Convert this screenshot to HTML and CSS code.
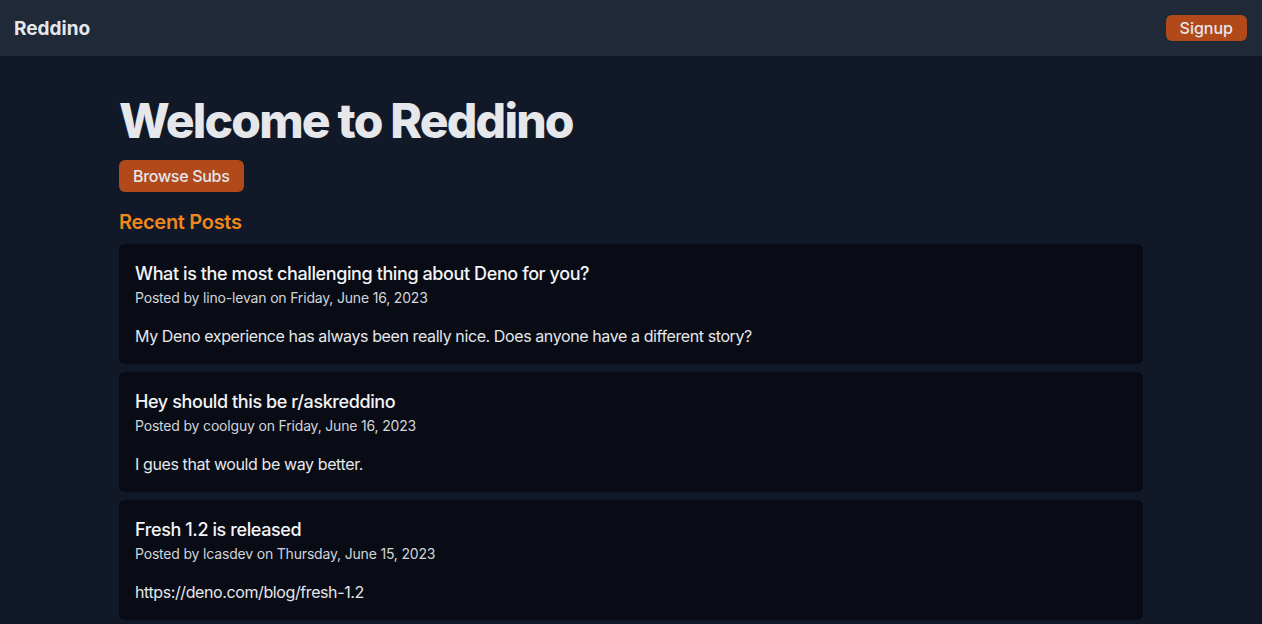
FILE: index.html
```html
<!DOCTYPE html>
<html lang="en">
<head>
    <meta charset="UTF-8">
    <meta name="viewport" content="width=device-width, initial-scale=1.0">
    <title>Reddino</title>
    <link rel="stylesheet" href="styles.css">
</head>
<body>
    <header class="topbar">
        <a class="brand" href="#">Reddino</a>
        <a class="btn btn-small" href="#">Signup</a>
    </header>

    <main class="container">
        <h1 class="title">Welcome to Reddino</h1>
        <a class="btn" href="#">Browse Subs</a>

        <h2 class="section-title">Recent Posts</h2>
        <ul class="posts">
            <li class="post">
                <h3 class="post-title">What is the most challenging thing about Deno for you?</h3>
                <p class="post-meta">Posted by lino-levan on Friday, June 16, 2023</p>
                <p class="post-body">My Deno experience has always been really nice. Does anyone have a different story?</p>
            </li>
            <li class="post">
                <h3 class="post-title">Hey should this be r/askreddino</h3>
                <p class="post-meta">Posted by coolguy on Friday, June 16, 2023</p>
                <p class="post-body">I gues that would be way better.</p>
            </li>
            <li class="post">
                <h3 class="post-title">Fresh 1.2 is released</h3>
                <p class="post-meta">Posted by lcasdev on Thursday, June 15, 2023</p>
                <p class="post-body">https://deno.com/blog/fresh-1.2</p>
            </li>
        </ul>
    </main>
</body>
</html>
```

FILE: styles.css
```css
* {
    box-sizing: border-box;
}
body {
    margin: 0;
    font-family: Inter, "Noto Sans", sans-serif;
    background-color: #111827;
    color: #e5e7eb;
}
a {
    text-decoration: none;
    color: inherit;
}
.topbar {
    height: 56px;
    padding: 0 15px 0 14px;
    display: flex;
    align-items: center;
    justify-content: space-between;
    background-color: #1f2937;
}
.brand {
    font-size: 19px;
    font-weight: 700;
    letter-spacing: 0;
    color: #e5e7eb;
}
.btn {
    display: inline-block;
    padding: 4px 14px;
    font-size: 16px;
    line-height: 24px;
    font-weight: 500;
    letter-spacing: -0.3px;
    color: #e5e7eb;
    background-color: #b1491a;
    border-radius: 6px;
}
.btn-small {
    padding: 1px 14px;
    letter-spacing: 0;
}
.container {
    max-width: 1024px;
    margin: 0 auto;
    padding-top: 41px;
}
.title {
    margin: 0 0 15px;
    font-size: 48px;
    line-height: 48px;
    font-weight: 800;
    letter-spacing: -1.8px;
    color: #e5e7eb;
}
.section-title {
    margin: 16px 0 8px;
    font-size: 20px;
    line-height: 28px;
    font-weight: 600;
    letter-spacing: -0.3px;
    color: #f0881e;
}
.posts {
    list-style: none;
    margin: 0;
    padding: 0;
    display: flex;
    flex-direction: column;
    gap: 8px;
}
.post {
    padding: 16px;
    background-color: #090c15;
    border-radius: 6px;
}
.post-title {
    margin: 0;
    font-size: 18px;
    line-height: 28px;
    font-weight: 500;
    letter-spacing: -0.4px;
    color: #f3f4f6;
}
.post-meta {
    margin: 0;
    font-size: 14px;
    line-height: 20px;
    letter-spacing: -0.18px;
    color: #d1d5db;
}
.post-body {
    margin: 16px 0 0;
    font-size: 16px;
    line-height: 24px;
    letter-spacing: -0.4px;
    color: #e5e7eb;
}
```
